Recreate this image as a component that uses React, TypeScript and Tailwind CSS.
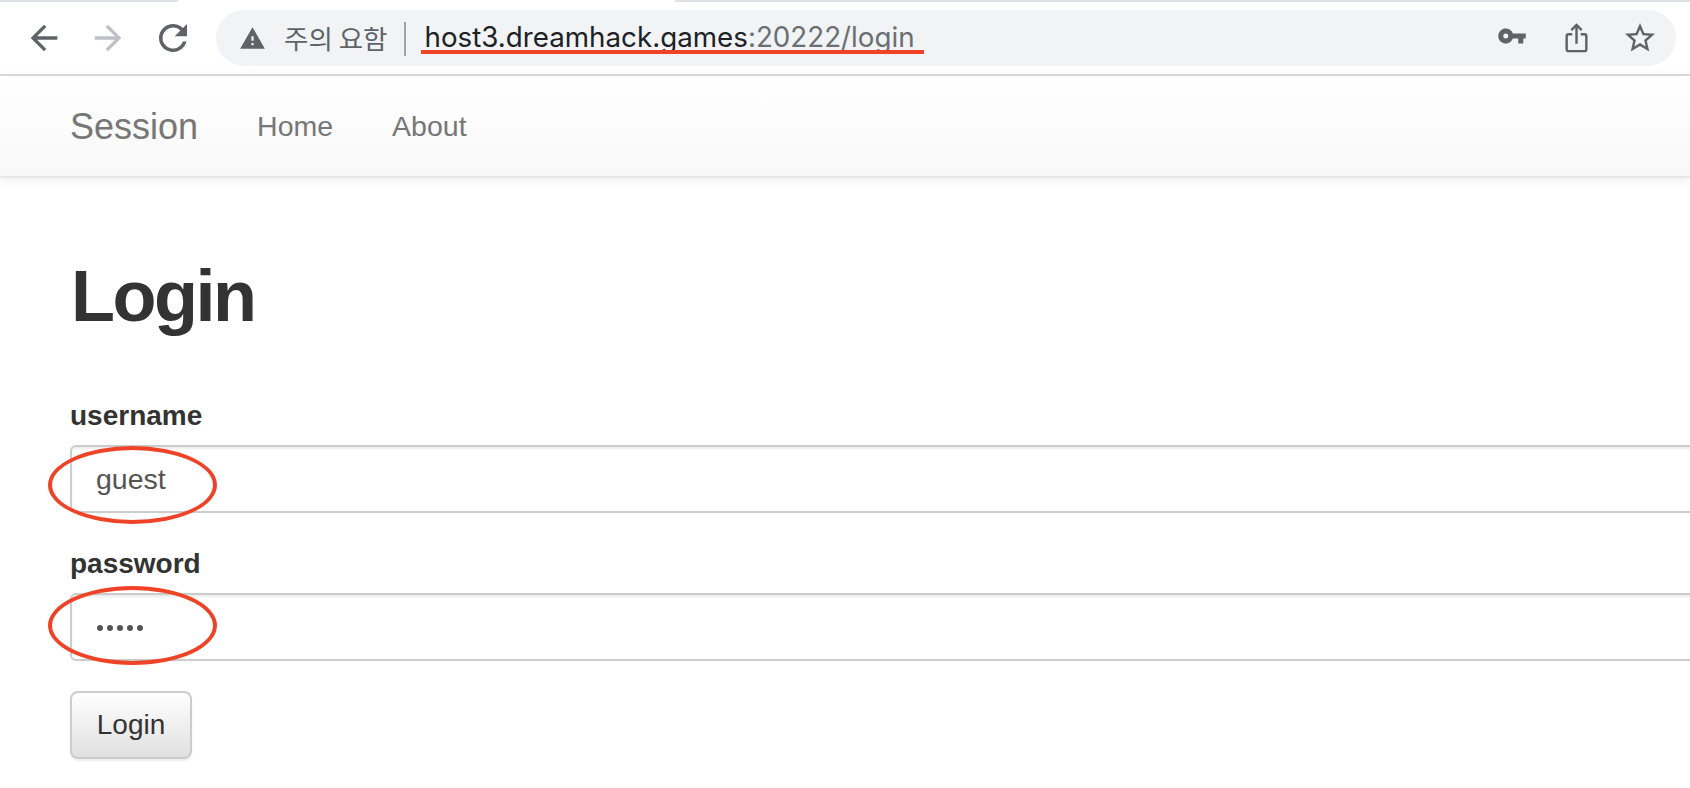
import { Fragment } from 'react'

const sans = "font-['Liberation_Sans',Arial,sans-serif]"

function Ellipse({ className }: { className: string }) {
  return <div className={`pointer-events-none absolute left-[48px] w-[169px] rounded-[50%] border-[4px] border-[#ee4327] ${className}`} />
}

function ToolbarIcons() {
  return (
    <Fragment>
      <svg viewBox="0 0 24 24" className="ml-[24px] h-[40px] w-[40px] shrink-0 fill-[#5f6368]">
        <path d="M20 11H7.830l5.590-5.590L12 4l-8 8 8 8 1.410-1.410L7.830 13H20z" />
      </svg>
      <svg viewBox="0 0 24 24" className="ml-[24px] h-[40px] w-[40px] shrink-0 fill-[#bdc1c6]">
        <path d="M4 11h12.170l-5.590-5.590L12 4l8 8-8 8-1.410-1.410L16.170 13H4z" />
      </svg>
      <svg viewBox="0 0 24 24" className="ml-[24px] h-[42px] w-[42px] shrink-0 fill-[#5f6368]">
        <path d="M17.650 6.350A7.950 7.950 0 0 0 12 4a8 8 0 1 0 7.730 10h-2.080A6 6 0 1 1 12 6c1.660 0 3.140.690 4.220 1.780L13 11h7V4z" />
      </svg>
    </Fragment>
  )
}

function Field({ label, className, children }: { label: string; className: string; children: React.ReactNode }) {
  return (
    <div className={className}>
      <div className="mb-[15px] text-[28px] leading-[28px] font-bold text-[#333]">{label}</div>
      <div className="flex h-[68px] w-[1800px] items-center rounded-[6px] border-2 border-[#ccc] bg-white pt-px pl-[24px] text-[28.5px] text-[#555] shadow-[inset_0_2px_2px_rgba(0,0,0,0.075)]">
        {children}
      </div>
    </div>
  )
}

export default function App() {
  return (
    <div className={`relative h-[788px] w-[1690px] overflow-hidden bg-white ${sans}`}>
      {/* tab strip remains */}
      <div className="flex h-[2px] justify-between">
        <div className="w-[178px] rounded-br-[6px] bg-[#dee1e6]" />
        <div className="w-[1015px] rounded-bl-[6px] bg-[#dee1e6]" />
      </div>

      {/* browser toolbar */}
      <div className="flex h-[74px] items-center border-b-2 border-[#dadce0]">
        <ToolbarIcons />
        <div className="ml-[22px] flex h-[56px] w-[1460px] items-center rounded-[28px] bg-[#f1f3f4] font-['Inter',sans-serif]">
          <svg viewBox="0 0 24 24" className="ml-[23px] h-[27px] w-[27px] shrink-0 fill-[#5f6368]">
            <path d="M1 21h22L12 2 1 21zm12-3h-2v-2h2v2zm0-4h-2v-4h2v4z" />
          </svg>
          <span className="ml-[18px] font-['Noto_Sans_CJK_KR',sans-serif] text-[26.5px] leading-none text-[#5f6368]">주의 요함</span>
          <div className="mt-px ml-[17px] h-[34px] w-[2px] bg-[#a0a3a7]" />
          <span className="ml-[18px] text-[27.75px] leading-none text-[#202124]">
            host3.dreamhack.games<span className="text-[#6b6f73]">:20222/login</span>
          </span>
          <div className="ml-auto flex items-center">
            <svg viewBox="0 0 24 24" className="mb-[4px] h-[30px] w-[30px] fill-[#5f6368]">
              <path d="M12.650 10A6 6 0 1 0 12.650 14H17v4h4v-4h2v-4H12.650zM7 14a2 2 0 1 1 0-4 2 2 0 0 1 0 4z" />
            </svg>
            <svg viewBox="0 0 24 32" className="ml-[38px] h-[30px] w-[23px] fill-none stroke-[#5f6368] stroke-[2.6]">
              <path d="M7.500 12H3.500a2 2 0 0 0-2 2v14a2 2 0 0 0 2 2h17a2 2 0 0 0 2-2V14a2 2 0 0 0-2-2h-4M12 22V2M6.500 7.500 12 2l5.500 5.500" />
            </svg>
            <svg viewBox="0 0 24 24" className="mr-[18px] ml-[34px] h-[36px] w-[36px] fill-[#5f6368]">
              <path d="M22 9.240l-7.190-.620L12 2 9.190 8.630 2 9.240l5.460 4.730L5.820 21 12 17.270 18.180 21l-1.630-7.030L22 9.240zM12 15.400l-3.760 2.270 1-4.280-3.320-2.880 4.380-.380L12 6.100l1.710 4.040 4.380.380-3.320 2.880 1 4.280L12 15.400z" />
            </svg>
          </div>
        </div>
      </div>
      <div className="absolute top-[50px] left-[421px] h-[4px] w-[503px] bg-[#ee4327]" />

      {/* navbar */}
      <nav className="flex h-[102px] items-center border-b-2 border-[#e7e7e7] bg-gradient-to-b from-white to-[#f8f8f8] pt-px pl-[70px] text-[#777] shadow-[0_2px_10px_rgba(0,0,0,0.075)]">
        <span className="text-[36px]">Session</span>
        <span className="ml-[59px] text-[28.5px]">Home</span>
        <span className="ml-[59px] text-[28.5px]">About</span>
      </nav>

      {/* login form */}
      <main className="pl-[70px]">
        <h1 className="mt-[78px] mb-[66px] ml-px text-[72px] leading-[80px] font-bold tracking-[-2.5px] text-[#333]">Login</h1>
        <Field label="username" className="mb-[37px]">guest</Field>
        <Field label="password" className="mb-[30px]">
          <span className="ml-px flex gap-[4px]">
            {[0, 1, 2, 3, 4].map((i) => (
              <span key={i} className="h-[6px] w-[6px] rounded-full bg-[#555]" />
            ))}
          </span>
        </Field>
        <button className="h-[68px] w-[122px] rounded-[8px] border-2 border-[#ccc] bg-gradient-to-b from-white to-[#e0e0e0] text-[28px] text-[#333] shadow-[0_2px_2px_rgba(0,0,0,0.075)]">
          Login
        </button>
      </main>

      {/* red annotation circles */}
      <Ellipse className="top-[446px] h-[78px]" />
      <Ellipse className="top-[586px] h-[79px]" />
    </div>
  )
}
